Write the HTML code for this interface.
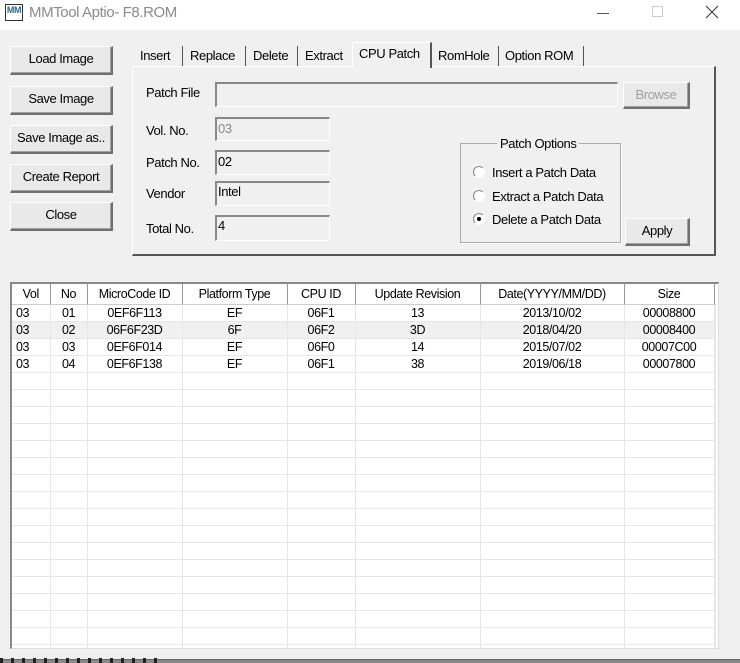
<!DOCTYPE html>
<html><head><style>
*{box-sizing:border-box;margin:0;padding:0}
body{width:740px;height:663px;background:#f0f0f0;font-family:"Liberation Sans",sans-serif;font-size:13px;color:#000;position:relative;overflow:hidden;letter-spacing:-0.4px}
.a{position:absolute}
.title{left:0;top:0;width:740px;height:30px;background:#fff}
.btn{position:absolute;background:#e9e9e9;border:1px solid #fff;border-right:2px solid #707070;border-bottom:2px solid #707070;text-align:center;line-height:24px;box-shadow:inset -1px -1px 0 #a0a0a0}
.tb{position:absolute;background:#f0f0f0;border-top:2px solid #888;border-left:2px solid #888;border-bottom:1px solid #fff;border-right:1px solid #fff;padding-left:1px;line-height:20px}
.lbl{position:absolute}
.tab{position:absolute;top:48px}
.sep{position:absolute;top:46px;width:1px;height:20px;background:#555}
.rad{position:absolute;width:12px;height:12px;border-radius:50%;border:1px solid #888;border-right-color:#fff;border-bottom-color:#fff;background:#fff}
table{border-collapse:collapse;font-size:12.5px}
td{border-right:1px solid #e6e6e6;border-bottom:1px solid #e6e6e6;height:17px;line-height:16px;text-align:center;padding:0}
th{font-weight:normal;height:20px;border-right:1px solid #999;border-bottom:1px solid #ccc;background:#fff}
</style></head><body>
<div class="a title"></div>
<div class="a" style="left:5px;top:4px;width:18px;height:17px;border:1px solid #333;font-size:9px;line-height:10px;color:#2a6a8a;font-weight:bold;text-align:center">MM</div>
<div class="a" style="left:29px;top:4px;font-size:15px;color:#8a8a8a">MMTool Aptio- F8.ROM</div>
<div class="a" style="left:597px;top:13px;width:12px;height:1px;background:#555"></div>
<div class="a" style="left:652px;top:6px;width:11px;height:11px;border:1px solid #ccc"></div>
<svg class="a" style="left:705px;top:5px" width="14" height="14"><path d="M1 1L13 13M13 1L1 13" stroke="#444" stroke-width="1.2"/></svg>

<div class="btn" style="left:10px;top:46px;width:103px;height:29px">Load Image</div>
<div class="btn" style="left:10px;top:86px;width:103px;height:29px">Save Image</div>
<div class="btn" style="left:10px;top:125px;width:103px;height:29px">Save Image as..</div>
<div class="btn" style="left:10px;top:164px;width:103px;height:29px">Create Report</div>
<div class="btn" style="left:10px;top:202px;width:103px;height:29px">Close</div>

<div class="a" style="left:132px;top:66px;width:584px;height:190px;border-top:1px solid #fff;border-left:1px solid #fff;border-right:2px solid #555;border-bottom:2px solid #555"></div>
<div class="a" style="left:352px;top:42px;width:80px;height:26px;background:#f0f0f0;border-top:1px solid #fff;border-left:1px solid #fff;border-right:2px solid #555"></div>
<div class="tab" style="left:140px">Insert</div><div class="sep" style="left:182px"></div>
<div class="tab" style="left:190px">Replace</div><div class="sep" style="left:245px"></div>
<div class="tab" style="left:253px">Delete</div><div class="sep" style="left:297px"></div>
<div class="tab" style="left:305px">Extract</div>
<div class="tab" style="left:359px;top:46px">CPU Patch</div>
<div class="tab" style="left:438px">RomHole</div><div class="sep" style="left:498px"></div>
<div class="tab" style="left:505px">Option ROM</div><div class="sep" style="left:583px"></div>

<div class="lbl" style="left:146px;top:85px">Patch File</div>
<div class="tb" style="left:215px;top:82px;width:403px;height:25px"></div>
<div class="btn" style="left:623px;top:82px;width:67px;height:27px;color:#a0a0a0">Browse</div>
<div class="lbl" style="left:146px;top:123px">Vol. No.</div>
<div class="tb" style="left:215px;top:117px;width:115px;height:24px;color:#888">03</div>
<div class="lbl" style="left:146px;top:155px">Patch No.</div>
<div class="tb" style="left:215px;top:150px;width:115px;height:25px">02</div>
<div class="lbl" style="left:146px;top:186px">Vendor</div>
<div class="tb" style="left:215px;top:181px;width:115px;height:25px;line-height:18px">Intel</div>
<div class="lbl" style="left:146px;top:221px">Total No.</div>
<div class="tb" style="left:215px;top:215px;width:115px;height:26px;line-height:18px">4</div>

<div class="a" style="left:460px;top:143px;width:161px;height:100px;border:1px solid #aaa;box-shadow:1px 1px 0 #fff"></div>
<div class="a" style="left:497px;top:136px;background:#f0f0f0;padding:0 3px">Patch Options</div>
<div class="rad" style="left:473px;top:166px"></div><div class="a" style="left:492px;top:165px">Insert a Patch Data</div>
<div class="rad" style="left:473px;top:190px"></div><div class="a" style="left:492px;top:189px">Extract a Patch Data</div>
<div class="rad" style="left:473px;top:213px"><div class="a" style="left:3px;top:3px;width:4px;height:4px;border-radius:50%;background:#000"></div></div><div class="a" style="left:492px;top:212px">Delete a Patch Data</div>
<div class="btn" style="left:625px;top:218px;width:65px;height:28px">Apply</div>

<div class="a" style="left:10px;top:282px;width:709px;height:367px;background:#fff;border-top:2px solid #888;border-left:2px solid #888;border-right:1px solid #ddd;border-bottom:1px solid #ddd;overflow:hidden">
<table style="width:704px;table-layout:fixed">
<colgroup><col style="width:38px"><col style="width:37px"><col style="width:95px"><col style="width:105px"><col style="width:68px"><col style="width:125px"><col style="width:144px"><col style="width:90px"><col></colgroup>
<tr><th>Vol</th><th>No</th><th>MicroCode ID</th><th>Platform Type</th><th>CPU ID</th><th>Update Revision</th><th>Date(YYYY/MM/DD)</th><th>Size</th><th style="border-right:none"></th></tr>
<tr><td style="text-align:left;padding-left:4px">03</td><td>01</td><td>0EF6F113</td><td>EF</td><td>06F1</td><td>13</td><td>2013/10/02</td><td>00008800</td><td></td></tr>
<tr style="background:#f0f0f0"><td style="text-align:left;padding-left:4px">03</td><td>02</td><td>06F6F23D</td><td>6F</td><td>06F2</td><td>3D</td><td>2018/04/20</td><td>00008400</td><td></td></tr>
<tr><td style="text-align:left;padding-left:4px">03</td><td>03</td><td>0EF6F014</td><td>EF</td><td>06F0</td><td>14</td><td>2015/07/02</td><td>00007C00</td><td></td></tr>
<tr><td style="text-align:left;padding-left:4px">03</td><td>04</td><td>0EF6F138</td><td>EF</td><td>06F1</td><td>38</td><td>2019/06/18</td><td>00007800</td><td></td></tr>
<tr><td></td><td></td><td></td><td></td><td></td><td></td><td></td><td></td><td></td></tr>
<tr><td></td><td></td><td></td><td></td><td></td><td></td><td></td><td></td><td></td></tr>
<tr><td></td><td></td><td></td><td></td><td></td><td></td><td></td><td></td><td></td></tr>
<tr><td></td><td></td><td></td><td></td><td></td><td></td><td></td><td></td><td></td></tr>
<tr><td></td><td></td><td></td><td></td><td></td><td></td><td></td><td></td><td></td></tr>
<tr><td></td><td></td><td></td><td></td><td></td><td></td><td></td><td></td><td></td></tr>
<tr><td></td><td></td><td></td><td></td><td></td><td></td><td></td><td></td><td></td></tr>
<tr><td></td><td></td><td></td><td></td><td></td><td></td><td></td><td></td><td></td></tr>
<tr><td></td><td></td><td></td><td></td><td></td><td></td><td></td><td></td><td></td></tr>
<tr><td></td><td></td><td></td><td></td><td></td><td></td><td></td><td></td><td></td></tr>
<tr><td></td><td></td><td></td><td></td><td></td><td></td><td></td><td></td><td></td></tr>
<tr><td></td><td></td><td></td><td></td><td></td><td></td><td></td><td></td><td></td></tr>
<tr><td></td><td></td><td></td><td></td><td></td><td></td><td></td><td></td><td></td></tr>
<tr><td></td><td></td><td></td><td></td><td></td><td></td><td></td><td></td><td></td></tr>
<tr><td></td><td></td><td></td><td></td><td></td><td></td><td></td><td></td><td></td></tr>
<tr><td></td><td></td><td></td><td></td><td></td><td></td><td></td><td></td><td></td></tr>
<tr><td></td><td></td><td></td><td></td><td></td><td></td><td></td><td></td><td></td></tr>
<tr><td></td><td></td><td></td><td></td><td></td><td></td><td></td><td></td><td></td></tr>
<tr><td></td><td></td><td></td><td></td><td></td><td></td><td></td><td></td><td></td></tr>
</table>
</div>
<div class="a" style="left:0;top:659px;width:740px;height:4px;background:#888;border-top:1px solid #666"></div>
<div class="a" style="left:0;top:658px;width:160px;height:5px;background:repeating-linear-gradient(90deg,#222 0 3px,transparent 3px 11px)"></div>
</body></html>
